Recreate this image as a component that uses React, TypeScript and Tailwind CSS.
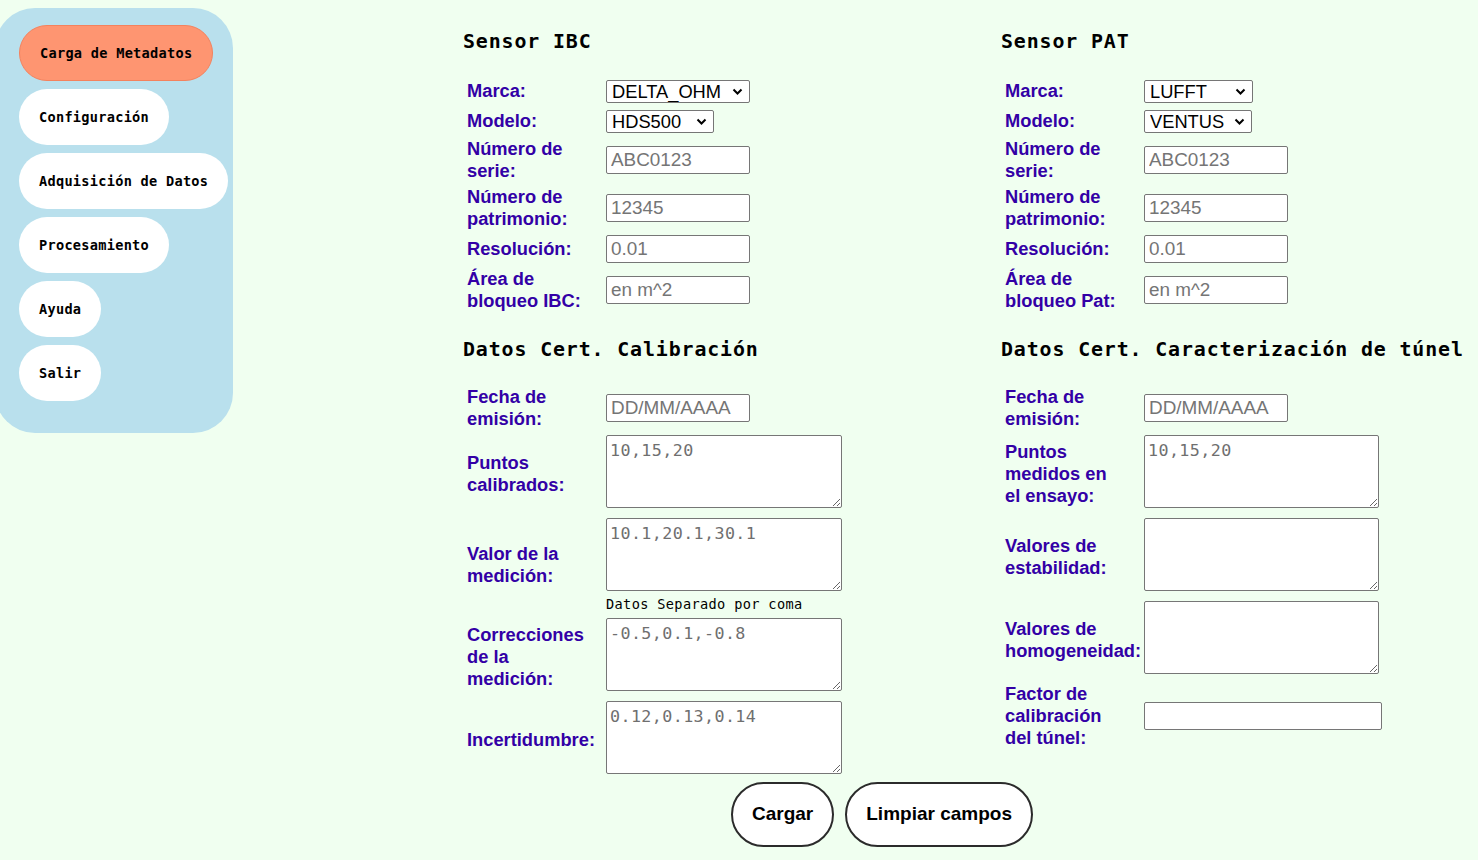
import type { ReactNode } from "react";

const mono = "font-['DejaVu_Sans_Mono',monospace]";
const sans = "font-['Liberation_Sans',Arial,sans-serif]";

const navItems = [
  "Carga de Metadatos",
  "Configuración",
  "Adquisición de Datos",
  "Procesamiento",
  "Ayuda",
  "Salir",
];

function Sidebar() {
  return (
    <nav className="-ml-[5px] mt-[8px] w-[238px] shrink-0 self-start rounded-[40px] bg-[#b9e0ed] pl-[24px] pt-[17px] pb-[32px] flex flex-col items-start gap-[8px]">
      {navItems.map((item, i) => (
        <button
          key={item}
          className={`h-[56px] rounded-full px-[20px] text-[13.6px] tracking-[0.28px] font-bold text-black ${mono} ${
            i === 0 ? "bg-[#fe9571] border border-[#f3825e] px-[19px]" : "bg-white"
          }`}
        >
          {item}
        </button>
      ))}
    </nav>
  );
}

function Heading({ children, className = "" }: { children: ReactNode; className?: string }) {
  return (
    <h2 className={`h-[28px] leading-[28px] whitespace-nowrap text-[19.9px] tracking-[0.88px] font-bold text-black ${mono} ${className}`}>
      {children}
    </h2>
  );
}

function Row({ label, className, children }: { label: ReactNode; className: string; children: ReactNode }) {
  return (
    <div className={`flex items-center ${className}`}>
      <div className="w-[143px] shrink-0 pl-[4px]">
        <label className={`block w-[118px] text-[18.3px] leading-[22px] font-bold text-[#3300a6] ${sans}`}>{label}</label>
      </div>
      {children}
    </div>
  );
}

function TextInput({ placeholder = "", w = "w-[144px]" }: { placeholder?: string; w?: string }) {
  return (
    <input
      type="text"
      placeholder={placeholder}
      className={`${w} h-[28px] rounded-[2px] border border-[#767676] bg-white px-[4px] text-[18.9px] text-black placeholder:text-[#757575] ${sans}`}
    />
  );
}

function Area({ placeholder = "", w = "w-[236px]" }: { placeholder?: string; w?: string }) {
  return (
    <textarea
      placeholder={placeholder}
      className={`${w} h-[73px] block rounded-[2px] border border-[#767676] bg-white px-[3px] py-[2px] text-[16.7px] tracking-[0.4px] text-black placeholder:text-[#6f6f6f] ${mono}`}
    />
  );
}

function Select({ value, w }: { value: string; w: string }) {
  return (
    <div className={`relative ${w} h-[23px]`}>
      <select
        defaultValue={value}
        className={`appearance-none w-full h-full rounded-[2px] border border-[#767676] bg-white pl-[5px] pr-[20px] text-[18.3px] leading-[21px] text-black ${sans}`}
      >
        <option>{value}</option>
      </select>
      <svg
        className="pointer-events-none absolute right-[7px] top-[8px] w-[11px] h-[7px]"
        viewBox="0 0 11 7"
        fill="none"
        stroke="black"
        strokeWidth={2}
      >
        <path d="M1.5 1.5l4 4 4-4" />
      </svg>
    </div>
  );
}

function SensorSection({ title, marca, marcaW, modelo, bloqueo }: { title: string; marca: string; marcaW: string; modelo: string; bloqueo: string }) {
  return (
    <>
      <Heading className="mb-[22px]">{title}</Heading>
      <div className="flex flex-col gap-[4px]">
        <Row label="Marca:" className="h-[26px]">
          <Select value={marca} w={marcaW} />
        </Row>
        <Row label="Modelo:" className="h-[26px]">
          <Select value={modelo} w="w-[108px]" />
        </Row>
        <Row label="Número de serie:" className="h-[44px]">
          <TextInput placeholder="ABC0123" />
        </Row>
        <Row label="Número de patrimonio:" className="h-[44px]">
          <TextInput placeholder="12345" />
        </Row>
        <Row label="Resolución:" className="h-[30px]">
          <TextInput placeholder="0.01" />
        </Row>
        <Row label={bloqueo} className="h-[44px]">
          <TextInput placeholder="en m^2" />
        </Row>
      </div>
    </>
  );
}

function CalibrationColumn() {
  return (
    <div className="flex flex-col">
      <SensorSection title="Sensor IBC" marca="DELTA_OHM" marcaW="w-[144px]" modelo="HDS500" bloqueo="Área de bloqueo IBC:" />
      <Heading className="mt-[24px] mb-[22px]">Datos Cert. Calibración</Heading>
      <div className="flex flex-col gap-[4px]">
        <Row label="Fecha de emisión:" className="h-[44px]">
          <TextInput placeholder="DD/MM/AAAA" />
        </Row>
        <Row label="Puntos calibrados:" className="h-[79px]">
          <div className="self-stretch pt-[1px]">
            <Area placeholder="10,15,20" />
          </div>
        </Row>
        <Row label="Valor de la medición:" className="h-[96px]">
          <div className="self-stretch pt-[1px]">
            <Area placeholder="10.1,20.1,30.1" />
            <p className={`mt-[4px] leading-[18px] text-[13.6px] tracking-[0.36px] text-black ${mono}`}>Datos Separado por coma</p>
          </div>
        </Row>
        <Row label="Correcciones de la medición:" className="h-[79px]">
          <div className="self-stretch pt-[1px]">
            <Area placeholder="-0.5,0.1,-0.8" />
          </div>
        </Row>
        <Row label="Incertidumbre:" className="h-[79px]">
          <div className="self-stretch pt-[1px]">
            <Area placeholder="0.12,0.13,0.14" />
          </div>
        </Row>
      </div>
    </div>
  );
}

function TunnelColumn() {
  return (
    <div className="flex flex-col">
      <SensorSection title="Sensor PAT" marca="LUFFT" marcaW="w-[109px]" modelo="VENTUS" bloqueo="Área de bloqueo Pat:" />
      <Heading className="mt-[24px] mb-[22px]">Datos Cert. Caracterización de túnel</Heading>
      <div className="flex flex-col gap-[4px]">
        <Row label="Fecha de emisión:" className="h-[44px]">
          <TextInput placeholder="DD/MM/AAAA" />
        </Row>
        <Row label="Puntos medidos en el ensayo:" className="h-[79px]">
          <div className="self-stretch pt-[1px]">
            <Area placeholder="10,15,20" w="w-[235px]" />
          </div>
        </Row>
        <Row label="Valores de estabilidad:" className="h-[79px]">
          <div className="self-stretch pt-[1px]">
            <Area w="w-[235px]" />
          </div>
        </Row>
        <Row label="Valores de homogeneidad:" className="h-[79px]">
          <div className="self-stretch pt-[1px]">
            <Area w="w-[235px]" />
          </div>
        </Row>
        <Row label="Factor de calibración del túnel:" className="h-[66px]">
          <TextInput w="w-[238px]" />
        </Row>
      </div>
    </div>
  );
}

export default function App() {
  return (
    <div className="min-h-screen bg-[#f0fff0] flex">
      <Sidebar />
      <main className="pl-[230px] pt-[28px]">
        <div className="grid grid-cols-[538px_auto]">
          <CalibrationColumn />
          <TunnelColumn />
        </div>
        <div className="mt-[3px] w-[838px] flex justify-center gap-[11px]">
          <button className={`h-[65px] rounded-full border-2 border-[#2b2b2b] bg-white px-[19px] text-[19px] font-bold text-black ${sans}`}>
            Cargar
          </button>
          <button className={`h-[65px] rounded-full border-2 border-[#2b2b2b] bg-white px-[19px] text-[19px] font-bold text-black ${sans}`}>
            Limpiar campos
          </button>
        </div>
      </main>
    </div>
  );
}
